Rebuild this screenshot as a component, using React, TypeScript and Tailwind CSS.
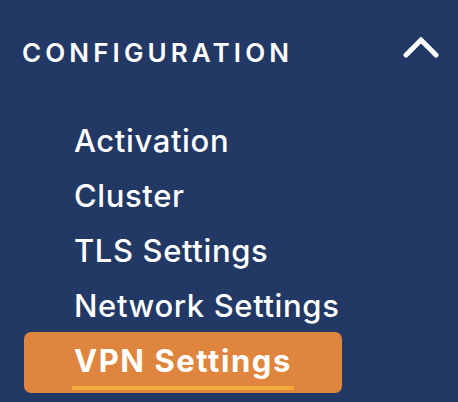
import React from "react";

const items = ["Activation", "Cluster", "TLS Settings", "Network Settings"];

export default function App() {
  return (
    <div
      className="w-[458px] h-[402px] bg-[#223865] text-white overflow-hidden"
      style={{ fontFamily: "Inter, 'Noto Sans', sans-serif" }}
    >
      <div className="flex justify-between items-start pl-[22px] pr-[19px] pt-[40px]">
        <span className="text-[26px] leading-none font-semibold tracking-[0.158em]">
          CONFIGURATION
        </span>
        <svg width="36" height="22" viewBox="0 0 36 22" className="-mt-[3px]">
          <path
            d="M3 18 L18 3 L33 18"
            fill="none"
            stroke="white"
            strokeWidth="5"
            strokeLinecap="round"
            strokeLinejoin="miter"
          />
        </svg>
      </div>
      <ul className="mt-[47px]">
        {items.map((t) => (
          <li
            key={t}
            className="pl-[74px] text-[31px] leading-[55px] font-medium tracking-[0.02em]"
          >
            {t}
          </li>
        ))}
        <li className="-mt-[1px] ml-[24px] w-[318px] rounded-[7px] bg-[#e0853d] pl-[50px] pt-[13px] pb-[3px]">
          <div className="inline-flex flex-col">
            <span className="text-[31px] leading-none font-bold tracking-[0.05em]">VPN Settings</span>
            <div className="mt-[10px] h-[4px] -mx-[2px] bg-[#f3aa38]" />
          </div>
        </li>
      </ul>
    </div>
  );
}
